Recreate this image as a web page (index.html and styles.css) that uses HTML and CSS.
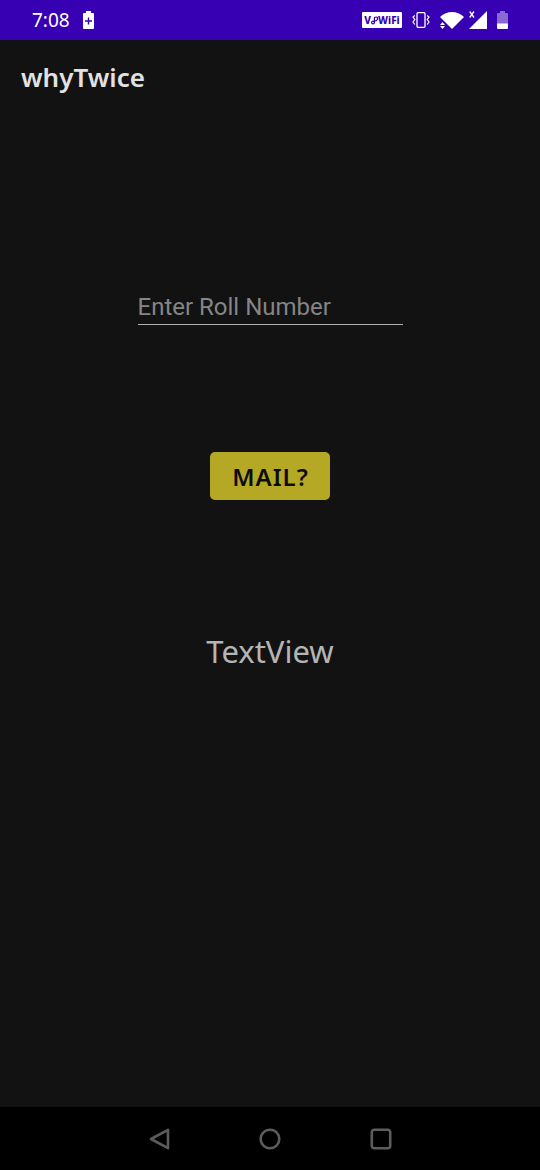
FILE: index.html
```html
<!DOCTYPE html>
<html lang="en">
<head>
<meta charset="utf-8">
<meta name="viewport" content="width=device-width, initial-scale=1">
<title>whyTwice</title>
<link rel="stylesheet" href="styles.css">
</head>
<body>
<div class="status-bar">
  <div class="status-group status-left">
    <time class="clock">7:08</time>
    <svg class="icon" width="11" height="18" viewBox="0 0 11 18" aria-hidden="true">
      <path fill="#fff" d="M3 0h5v2h2q1 0 1 1v14q0 1-1 1H1q-1 0-1-1V3q0-1 1-1h2z"/>
      <path stroke="#3700b3" stroke-width="1.4" d="M5.500 6.500v7M2 10h7"/>
    </svg>
  </div>
  <div class="status-group status-right">
    <span class="vowifi">V<svg width="7" height="9" viewBox="0 0 7 9" aria-hidden="true"><g fill="none" stroke="#3700b3" stroke-width="1.2"><circle cx="2" cy="6.500" r="1.400"/><path d="M3.400 6.500V1.500q2-1 3 0v2q-1 2-3 1"/></g></svg>WiFi</span>
    <svg class="icon" width="18" height="16" viewBox="0 0 18 16" fill="none" stroke="#fff" aria-hidden="true">
      <rect x="5" y=".7" width="8" height="14.600" rx="1" stroke-width="1.300"/>
      <path stroke-width="1.200" d="M2.800 3.500L1 5l1.800 2.500L1 10l1.800 2.500M15.200 3.500L17 5l-1.800 2.500L17 10l-1.800 2.500"/>
    </svg>
    <svg class="icon" width="24" height="17" viewBox="0 0 24 17" fill="#fff" aria-hidden="true">
      <path d="M0 5Q5.500 0 12 0t12 5L12 17z"/>
      <path stroke="#3700b3" stroke-width="1.600" paint-order="stroke" d="M0 13l2.500-3L5 13zM0 14h5l-2.500 3z"/>
    </svg>
    <svg class="icon signal" width="18" height="18" viewBox="0 0 18 18" aria-hidden="true">
      <path fill="#fff" d="M18 0v18H0z"/>
      <path stroke="#3700b3" stroke-width="3" d="M0 0l6 7M6 0L0 7"/>
      <path stroke="#fff" stroke-width="1.300" d="M.7 .5l4.300 6M5 .5l-4.300 6"/>
    </svg>
    <svg class="icon" width="11" height="18" viewBox="0 0 11 18" aria-hidden="true">
      <path fill="#8a69d2" d="M3 0h5v2h2q1 0 1 1v10H0V3q0-1 1-1h2z"/>
      <path fill="#fff" d="M0 12.500h11V17q0 1-1 1H1q-1 0-1-1z"/>
    </svg>
  </div>
</div>
<header class="app-bar"><h1 class="title">whyTwice</h1></header>
<main class="content">
  <input class="roll" type="text" placeholder="Enter Roll Number" aria-label="Enter Roll Number">
  <button class="mail" type="button">MAIL?</button>
  <p class="result">TextView</p>
</main>
<nav class="nav-bar">
  <button class="nav-button" type="button" aria-label="Back"><svg width="22" height="22" viewBox="0 0 22 22"><path d="M20 1.800v18.400L3 11z"/></svg></button>
  <button class="nav-button" type="button" aria-label="Home"><svg width="22" height="22" viewBox="0 0 22 22"><circle cx="11" cy="11" r="9.300"/></svg></button>
  <button class="nav-button" type="button" aria-label="Recent apps"><svg width="22" height="22" viewBox="0 0 22 22"><rect x="1.800" y="1.800" width="18.400" height="18.400" rx="2.500"/></svg></button>
</nav>
</body>
</html>
```
FILE: styles.css
```css
* {
  box-sizing: border-box;
}

body {
  margin: 0;
  min-height: 100vh;
  display: flex;
  flex-direction: column;
  background: #121212;
  font-family: "Noto Sans", sans-serif;
}

.status-bar {
  display: flex;
  justify-content: space-between;
  height: 40px;
  padding: 0 32px;
  background: #3700b3;
  color: #fff;
}

.status-group {
  display: flex;
  align-items: center;
}

.status-left {
  gap: 13px;
}

.status-right {
  gap: 10px;
}

.icon {
  display: block;
}

.signal {
  margin-left: -5px;
}

.clock {
  font-size: 19px;
  line-height: 24px;
}

.vowifi {
  display: flex;
  align-items: center;
  justify-content: center;
  width: 40px;
  height: 16px;
  border-radius: 1px;
  background: #fff;
  color: #3700b3;
  font-size: 10px;
  font-weight: 800;
  line-height: 16px;
}

.app-bar {
  padding: 19px 21px 21px;
}

.title {
  margin: 0;
  color: #e2e2e2;
  font-size: 26px;
  font-weight: 600;
  line-height: 36px;
}

.content {
  flex: 1;
  display: flex;
  flex-direction: column;
  align-items: center;
  padding-top: 169px;
}

.roll {
  width: 265px;
  height: 40px;
  padding: 5px 0 0;
  border: 0;
  border-bottom: 1px solid #b0b0b0;
  border-radius: 0;
  outline: 0;
  background: transparent;
  color: #e2e2e2;
  font-family: Roboto, sans-serif;
  font-size: 24px;
}

.roll::placeholder {
  color: #858585;
  opacity: 1;
}

.mail {
  height: 48px;
  margin-top: 127px;
  padding: 0 21px 0 22px;
  border: 0;
  border-radius: 5px;
  background: #b5a824;
  color: #0c0c0c;
  font-family: inherit;
  font-size: 24px;
  font-weight: 600;
  letter-spacing: 1px;
}

.result {
  margin: 129px 0 0;
  color: #b5b5b5;
  font-size: 31px;
  line-height: 44px;
}

.nav-bar {
  display: flex;
  justify-content: center;
  gap: 63px;
  height: 63px;
  background: #000;
}

.nav-button {
  display: flex;
  align-items: center;
  justify-content: center;
  width: 48px;
  padding: 0;
  border: 0;
  background: transparent;
}

.nav-button svg {
  fill: none;
  stroke: #5c5c5c;
  stroke-width: 2.6;
  stroke-linejoin: round;
}
```
